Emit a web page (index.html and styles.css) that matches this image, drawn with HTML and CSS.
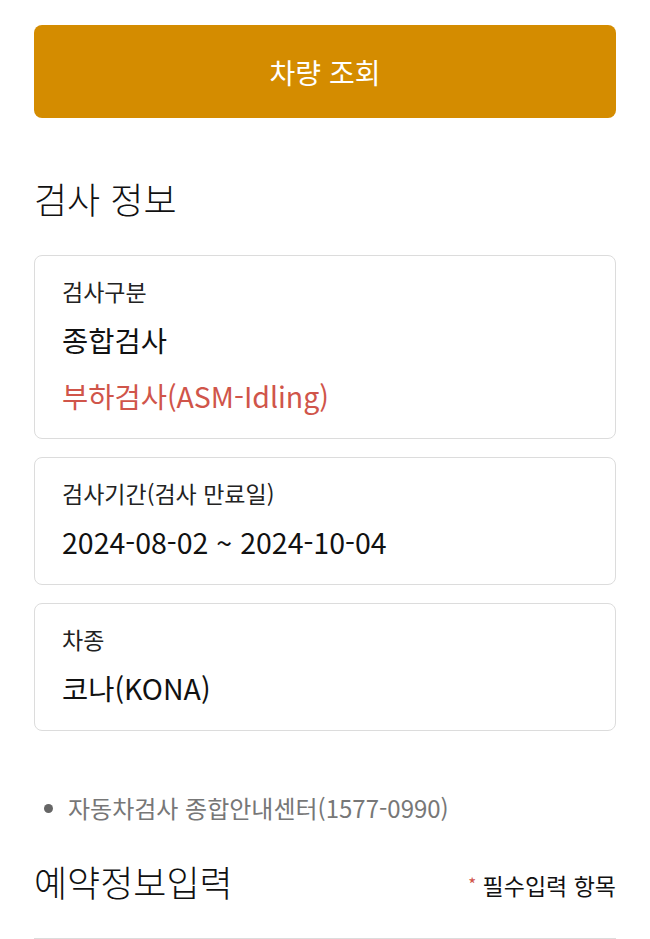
FILE: index.html
```html
<!DOCTYPE html>
<html lang="ko">
  <head>
    <meta charset="UTF-8" />
    <meta name="viewport" content="width=device-width, initial-scale=1.0" />
    <title>검사 예약</title>
    <link rel="stylesheet" href="styles.css">
  </head>
  <body>
    <div class="container">
      <button type="button" class="search-btn">차량 조회</button>

      <h2 class="section-title">검사 정보</h2>

      <div class="info-card">
        <div class="info-label">검사구분</div>
        <div class="info-value">종합검사</div>
        <div class="info-value info-sub">부하검사(ASM-Idling)</div>
      </div>
      <div class="info-card">
        <div class="info-label">검사기간(검사 만료일)</div>
        <div class="info-value">2024-08-02 ~ 2024-10-04</div>
      </div>
      <div class="info-card">
        <div class="info-label">차종</div>
        <div class="info-value">코나(KONA)</div>
      </div>

      <ul class="notice">
        <li>자동차검사 종합안내센터(1577-0990)</li>
      </ul>

      <div class="title-row">
        <h2 class="section-title">예약정보입력</h2>
        <span class="required"><span class="star">*</span> 필수입력 항목</span>
      </div>
      <div class="form-start"></div>
    </div>
  </body>
</html>
```

FILE: styles.css
```css
body {
  font-family: "Noto Sans CJK KR", "Noto Sans", sans-serif;
  background-color: #fff;
  color: #111;
  margin: 0;
  padding: 0;
}
.container {
  padding: 25px 34px 0;
}
.search-btn {
  display: block;
  width: 100%;
  height: 93px;
  border: none;
  border-radius: 8px;
  background-color: #d48c00;
  color: #fff;
  font-family: inherit;
  font-size: 28px;
  cursor: pointer;
}
.section-title {
  margin: 0;
  font-size: 36px;
  font-weight: 300;
  line-height: 50px;
  color: #111;
}
.container > .section-title {
  margin-top: 55px;
  margin-bottom: 32px;
}
.info-card {
  border: 1px solid #dcdcdc;
  border-radius: 8px;
  padding: 20px 27px 22px;
  margin-bottom: 18px;
}
.info-label {
  font-size: 23px;
  line-height: 30px;
  color: #222;
}
.info-value {
  font-size: 28.5px;
  line-height: 40px;
  margin-top: 14px;
  color: #111;
}
.info-sub {
  margin-top: 16px;
  color: #d0554a;
}
.notice {
  list-style: none;
  margin: 60px 0 0;
  padding: 0 0 0 34px;
  color: #777;
  font-size: 24px;
  line-height: 34px;
}
.notice li {
  position: relative;
}
.notice li::before {
  content: "";
  position: absolute;
  left: -24px;
  top: 13px;
  width: 9px;
  height: 9px;
  border-radius: 50%;
  background-color: #666;
}
.title-row {
  display: flex;
  justify-content: space-between;
  align-items: center;
  margin-top: 31px;
}
.required {
  font-size: 23px;
  color: #111;
  padding-top: 8px;
}
.star {
  color: #d0554a;
  font-size: 17px;
  vertical-align: 4px;
}
.form-start {
  margin-top: 32px;
  border-top: 1px solid #dcdcdc;
  height: 20px;
}
```
